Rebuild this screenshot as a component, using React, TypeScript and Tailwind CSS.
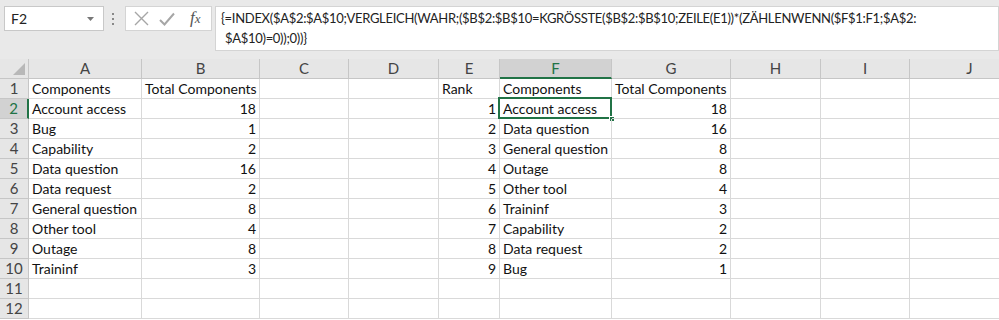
import React from 'react'

const cols = ['A', 'B', 'C', 'D', 'E', 'F', 'G', 'H', 'I', 'J']
const widths = [113, 118, 89, 90, 61, 112, 119, 90, 89, 120]

type Cell = { v: string; num?: boolean }

const left: [string, string][] = [
  ['Account access', '18'],
  ['Bug', '1'],
  ['Capability', '2'],
  ['Data question', '16'],
  ['Data request', '2'],
  ['General question', '8'],
  ['Other tool', '4'],
  ['Outage', '8'],
  ['Traininf', '3'],
]

const ranked: [string, string][] = [
  ['Account access', '18'],
  ['Data question', '16'],
  ['General question', '8'],
  ['Outage', '8'],
  ['Other tool', '4'],
  ['Traininf', '3'],
  ['Capability', '2'],
  ['Data request', '2'],
  ['Bug', '1'],
]

function buildRows(): Cell[][] {
  const rows: Cell[][] = []
  for (let r = 1; r <= 12; r++) {
    const row: Cell[] = cols.map(() => ({ v: '' }))
    if (r === 1) {
      row[0] = { v: 'Components' }
      row[1] = { v: 'Total Components' }
      row[4] = { v: 'Rank' }
      row[5] = { v: 'Components' }
      row[6] = { v: 'Total Components' }
    } else if (r <= 10) {
      const a = left[r - 2]
      row[0] = { v: a[0] }
      row[1] = { v: a[1], num: true }
      const b = ranked[r - 2]
      if (b) {
        row[4] = { v: String(r - 1), num: true }
        row[5] = { v: b[0] }
        row[6] = { v: b[1], num: true }
      }
    }
    rows.push(row)
  }
  return rows
}

function FormulaBar() {
  return (
    <div className="h-[59px] bg-[#e9e9e9] flex items-start pt-[6px] pl-[4px]">
      {/* name box */}
      <div className="w-[100px] h-[25px] bg-white border border-[#c8c8c8] flex items-center justify-between pl-[6px] pr-[9px] text-[14px] text-[#222]">
        <span>F2</span>
        <svg width="7" height="4" viewBox="0 0 7 4">
          <path d="M0 0h7L3.5 4z" fill="#777" />
        </svg>
      </div>
      {/* separator dots */}
      <div className="flex flex-col gap-[3px] ml-[8px] mt-[7px]">
        <span className="w-[2px] h-[2px] bg-[#888]" />
        <span className="w-[2px] h-[2px] bg-[#888]" />
        <span className="w-[2px] h-[2px] bg-[#888]" />
      </div>
      {/* buttons */}
      <div className="ml-[11px] w-[87px] h-[25px] bg-white border border-[#d4d4d4] flex items-center pl-[8px]">
        <svg width="15" height="15" viewBox="0 0 15 15">
          <path d="M1 1L14 14M14 1L1 14" stroke="#a6a6a6" strokeWidth="1.4" />
        </svg>
        <svg className="ml-[10px]" width="16" height="14" viewBox="0 0 16 14">
          <path d="M1 8L5.5 12.5L15 1.5" stroke="#a6a6a6" strokeWidth="2" fill="none" />
        </svg>
        <span className="ml-[15px] text-[17px] leading-[20px] italic text-[#555] font-['Liberation_Serif',serif]">
          f<span className="text-[13px]">x</span>
        </span>
      </div>
      {/* formula */}
      <div className="ml-[3px] flex-1 h-[45px] bg-white border border-[#d4d4d4] pl-[5px] pt-[1px] text-[13px] leading-[20px] text-[#222] font-['Lato',sans-serif] tracking-[-0.3px]">
        <div>{'{=INDEX($A$2:$A$10;VERGLEICH(WAHR;($B$2:$B$10=KGRÖSSTE($B$2:$B$10;ZEILE(E1))*(ZÄHLENWENN($F$1:F1;$A$2:'}</div>
        <div className="pl-[4px]">{'$A$10)=0));0))}'}</div>
      </div>
    </div>
  )
}

export default function App() {
  const rows = buildRows()
  const template = `29px ${widths.map((w) => w + 'px').join(' ')}`
  return (
    <div className="w-[999px] h-[320px] overflow-hidden bg-white font-['Lato',sans-serif] text-[14px] text-[#111]">
      <FormulaBar />
      <div className="grid" style={{ gridTemplateColumns: template, gridAutoRows: '20px' }}>
        {/* corner */}
        <div className="bg-[#e6e6e6] border-r border-b border-[#c6c6c6] flex items-end justify-end p-[3px]">
          <svg width="12" height="12" viewBox="0 0 12 12">
            <path d="M12 0V12H0z" fill="#b8b8b8" />
          </svg>
        </div>
        {cols.map((c) => (
          <div
            key={c}
            className={
              c === 'F'
                ? 'bg-[#d2d2d2] border-r border-[#c6c6c6] border-b-2 border-b-[#217346] text-[#217346] text-center leading-[19px] text-[15px]'
                : 'bg-[#e6e6e6] border-r border-b border-[#c6c6c6] text-[#444] text-center leading-[19px] text-[15px]'
            }
          >
            {c}
          </div>
        ))}
        {rows.map((row, ri) => (
          <React.Fragment key={ri}>
            <div
              className={
                ri === 1
                  ? 'bg-[#d2d2d2] border-r-2 border-r-[#217346] border-b border-[#c6c6c6] text-[#217346] text-center leading-[19px] text-[15px]'
                  : 'bg-[#e6e6e6] border-r border-b border-[#c6c6c6] text-[#444] text-center leading-[19px] text-[15px]'
              }
            >
              {ri + 1}
            </div>
            {row.map((cell, ci) => (
              <div
                key={ci}
                className={`relative border-r border-b border-[#d9d9d9] px-[3px] leading-[19px] whitespace-nowrap ${
                  cell.num ? 'text-right' : 'text-left'
                }`}
              >
                {cell.v}
                {ri === 1 && ci === 5 && (
                  <>
                    <div className="absolute left-[-2px] top-[-2px] right-[-1px] bottom-[-1px] border-2 border-[#217346] pointer-events-none" />
                    <div className="absolute right-[-4px] bottom-[-4px] w-[6px] h-[6px] bg-[#217346] border border-white" />
                  </>
                )}
              </div>
            ))}
          </React.Fragment>
        ))}
      </div>
    </div>
  )
}
